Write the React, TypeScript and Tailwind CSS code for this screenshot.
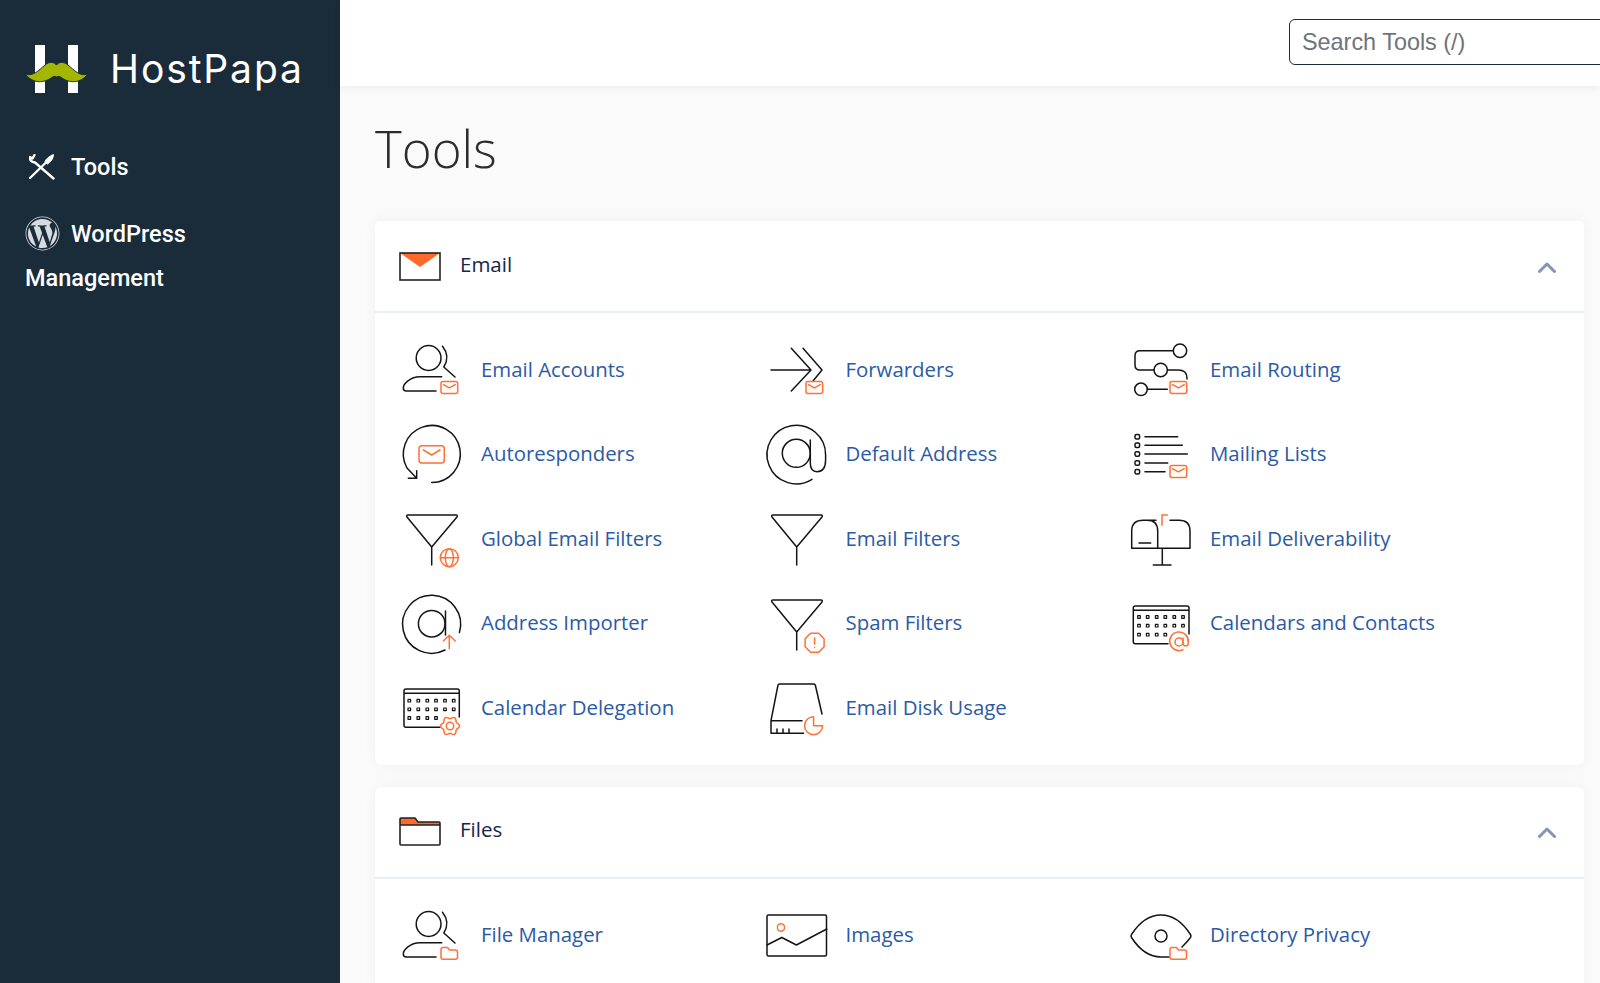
import React from "react";
import { FaWordpress } from "react-icons/fa";

const K = "#141414";
const O = "#ff7036";

function S({ children }: { children: React.ReactNode }) {
  return (
    <svg viewBox="0 0 64 64" fill="none" stroke={K} strokeWidth={1.5} strokeLinecap="round" strokeLinejoin="round" className="h-16 w-16 shrink-0 overflow-visible">
      {children}
    </svg>
  );
}

const Env = ({ y = 43.5 }: { y?: number }) => (
  <g stroke={O}>
    <rect x={43} y={y} width={16.7} height={12} rx={2} fill="#fff" />
    <path d={`M45.5 ${y + 3.2}l5.9 3.2 5.9-3.2`} />
  </g>
);

const FolderBadge = () => (
  <path stroke={O} fill="#fff" d="M43 45.5q0-2 2-2h4.5l2 2.5h6q2 0 2 2v5.3q0 2-2 2H45q-2 0-2-2z" />
);

const Person = ({ children }: { children: React.ReactNode }) => (
  <S>
    <circle cx={30.6} cy={20} r={12.4} />
    <path d="M44.500 8.200q8 10 1.300 20.800l11.200 10" />
    <path d="M43.7 38.7H22C12 38.7 5.3 46 5.3 50q0 3 3 3H38" />
    {children}
  </S>
);

const Funnel = ({ children }: { children?: React.ReactNode }) => (
  <S>
    <path d="M10 8h48q2 0 1 2L33.7 40 9 10q-1-2 1-2zM33.7 40v18" />
    {children}
  </S>
);

const gearPath = (() => {
  const pts: string[] = [];
  for (let i = 0; i < 72; i++) {
    const t = (i / 72) * Math.PI * 2;
    const r = 8.4 + 1.1 * Math.cos(6 * t);
    pts.push(`${(52 + r * Math.cos(t)).toFixed(2)} ${(50 + r * Math.sin(t)).toFixed(2)}`);
  }
  return "M" + pts.join("L") + "Z";
})();

const Cal = ({ ox, oy, last, children }: { ox: number[]; oy: number[]; last: string; children: React.ReactNode }) => (
  <S>
    <path d={last} />
    {oy.map((y, r) =>
      ox.map((x, c) => (r === 2 && c > 3 ? null : <rect key={`${r}-${c}`} x={x - 1.3} y={y - 1.3} width={2.6} height={2.6} strokeWidth={1.2} />)),
    )}
    {children}
  </S>
);

const icons: Record<string, React.ReactNode> = {
  accounts: <Person><Env /></Person>,
  fileman: <Person><FolderBadge /></Person>,
  auto: (
    <S>
      <path d="M33.7 60.5A28.5 28.5 0 1 0 9 46l9.7 10.3M10.3 56.3h8.4v-7.6" />
      <g stroke={O}>
        <rect x={21} y={23.7} width={25.3} height={17.3} rx={3} />
        <path d="M25.3 28l8.4 5 8.3-5" />
      </g>
    </S>
  ),
  global: (
    <Funnel>
      <g stroke={O}>
        <circle cx={51.3} cy={50.7} r={9} />
        <ellipse cx={51.3} cy={50.7} rx={4} ry={9} />
        <path d="M42.3 50.7h18" />
      </g>
    </Funnel>
  ),
  importer: (
    <S>
      <path d="M47 58A29 29 0 1 1 61.4 40.5" />
      <circle cx={33.7} cy={31.7} r={13.3} />
      <path d="M47.5 19v24" />
      <path stroke={O} d="M51.3 56.7V44M45.3 49l6-5.7 6 5.7" />
    </S>
  ),
  delegation: (
    <Cal
      ox={[11.3, 20.3, 29.3, 38, 47, 55.7]}
      oy={[24.7, 33.3, 42]}
      last="M42 51.3H8q-2 0-2-2V15q0-2 2-2h51.3q2 0 2 2v26M6 17.3h55.3"
    >
      <g stroke={O}>
        <path d={gearPath} />
        <circle cx={52} cy={50} r={3.7} />
      </g>
    </Cal>
  ),
  forward: (
    <S>
      <path d="M8 32h39.3M28.3 10.3L48 32 28.3 53M40 10.3L59 32l-9 11" />
      <Env />
    </S>
  ),
  def: (
    <S>
      <path d="M49 57.3A29.3 29.3 0 1 1 62.6 33v5q0 11.7-8.6 11.7-6.7 0-6.7-8.7V18" />
      <circle cx={33.3} cy={31.3} r={14} />
    </S>
  ),
  filters: <Funnel />,
  spam: (
    <Funnel>
      <g stroke={O}>
        <path d="M47.6 41.2h8l5.5 5.5v8l-5.5 5.5h-8l-5.5-5.5v-8z" />
        <path d="M51.6 46v6M51.6 55.4v.1" />
      </g>
    </Funnel>
  ),
  disk: (
    <S>
      <path d="M8 44.7L15 9q.3-1 1.5-1h34.3q1.3 0 1.5 1L59 38M8 44.7h31M8 44.7v12.6h32.6M14 53v4M20 53v4M26 53v4" />
      <path stroke={O} d="M50.6 40.7A9 9 0 1 0 59.6 49.7H50.6Z" />
    </S>
  ),
  routing: (
    <S>
      <circle cx={53} cy={12.7} r={6.7} />
      <path d="M46.3 12.7H13q-5 0-5 5V27q0 5 5 5h14" />
      <circle cx={33.7} cy={32} r={6.7} />
      <path d="M40.4 32H51q9 0 9 8v1" />
      <circle cx={14} cy={51.3} r={6.3} />
      <path d="M20.3 51.3h20" />
      <Env />
    </S>
  ),
  lists: (
    <S>
      {[14.7, 23.3, 32, 41, 49.7].map((y) => (
        <rect key={y} x={8} y={y - 2.3} width={4.6} height={4.6} rx={1.5} />
      ))}
      <path d="M18 14.7h32.7M18 23.3h37.3M18 32h42.3M18 41h22.7M18 49.7h20" />
      <Env />
    </S>
  ),
  deliver: (
    <S>
      <path d="M4.7 41.3V24q0-10.7 11.6-10.7H20q10.7 0 10.7 10.7v17.3M16.3 13.3H29M43 13.3h9q11 0 11 10.7v17.3H4.7M35.3 41.3V58M26.3 58H44M12 36h11.7" />
      <path stroke={O} d="M35 18.3V8h5.3" />
    </S>
  ),
  contacts: (
    <Cal
      ox={[12, 20.7, 29.7, 38.3, 47.3, 56]}
      oy={[25, 33.7, 42.7]}
      last="M41 51.7H8.3q-2 0-2-2V16q0-2 2-2H60q2 0 2 2v26M6.3 18.3H62"
    >
      <g stroke={O}>
        <path d="M56 57.7A9.3 9.3 0 1 1 61.3 50v1q0 3-2.5 3t-2.8-3v-5" />
        <circle cx={52} cy={50} r={4} />
      </g>
    </Cal>
  ),
  images: (
    <S>
      <rect x={4} y={11} width={59.5} height={41} rx={1.5} />
      <path d="M4 41l14.8-7.5L33.4 41l30.4-16" />
      <ellipse stroke={O} cx={18} cy={23.5} rx={3.6} ry={3.8} />
    </S>
  ),
  privacy: (
    <S>
      <path d="M42 53H34C20 53 10 42 4.5 33.500Q3.500 32 4.500 30.500C10 22 20 11 34 11s24 11 29.500 19.500Q64.500 32 63.500 33.500Q60 38 55 43" />
      <circle cx={34} cy={32} r={6} />
      <FolderBadge />
    </S>
  ),
};

type Item = [string, string];

const email: Item[] = [
  ["accounts", "Email Accounts"], ["forward", "Forwarders"], ["routing", "Email Routing"],
  ["auto", "Autoresponders"], ["def", "Default Address"], ["lists", "Mailing Lists"],
  ["global", "Global Email Filters"], ["filters", "Email Filters"], ["deliver", "Email Deliverability"],
  ["importer", "Address Importer"], ["spam", "Spam Filters"], ["contacts", "Calendars and Contacts"],
  ["delegation", "Calendar Delegation"], ["disk", "Email Disk Usage"],
];
const files: Item[] = [["fileman", "File Manager"], ["images", "Images"], ["privacy", "Directory Privacy"]];

function Section({ title, icon, items }: { title: string; icon: React.ReactNode; items: Item[] }) {
  return (
    <section className="mb-[22px] rounded-md bg-white shadow-[0_0_14px_rgba(0,0,0,0.04)]">
      <header className="flex h-[92px] items-center border-b-2 border-[#e9eff5] pl-[24px] pr-[28px]">
        <span className="w-[61px] shrink-0">{icon}</span>
        <h2 className="pb-[4px] text-[20.500px] font-normal text-[#16264a]">{title}</h2>
        <svg viewBox="0 0 18 11" fill="none" stroke="#8595b5" strokeWidth={3} strokeLinecap="round" strokeLinejoin="round" className="ml-auto mt-[2px] h-[11px] w-[18px]">
          <path d="M1.500 9.500L9 2l7.500 7.500" />
        </svg>
      </header>
      <ul className="grid auto-rows-[84.67px] grid-cols-[364.500px_364.500px_364.500px] pb-[14px] pl-[23px] pt-[14.500px]">
        {items.map(([k, label]) => (
          <li key={label} className="flex items-center gap-[19px]">
            {icons[k]}
            <a className="pb-[2px] text-[20.400px] text-[#2b5aa6]">{label}</a>
          </li>
        ))}
      </ul>
    </section>
  );
}

export default function App() {
  return (
    <div className="flex h-[983px] w-full overflow-hidden bg-[#fafafa] font-['Open_Sans',sans-serif]">
      <aside className="w-[340px] shrink-0 bg-[#1a2b3a] pl-[25px] font-['Roboto',sans-serif] text-white">
        <div className="flex h-[145px] items-start pt-[45px]">
          <svg viewBox="0 0 63 48" className="h-12 w-[63px] shrink-0">
            <path fill="#fff" d="M10 0h10v48H10zM43 0h10v48H43z" />
            <path
              fill="#a4b600"
              stroke="#1a2b3a"
              strokeWidth={1}
              d="M0 29C8 32 14 25 20 20C25 16 29 17 31.500 20C34 17 38 16 43 20C49 25 55 32 63 29C55 39 44 38 37 33C34 31 33 31 31.500 32C30 31 29 31 26 33C19 38 8 39 0 29Z"
            />
          </svg>
          <span className="ml-[22px] mt-[1px] font-['Inter',sans-serif] text-[39px] font-normal leading-[46px] tracking-[1.900px]">HostPapa</span>
        </div>
        <nav className="text-[23.500px] font-medium leading-[44px]">
          <a className="flex h-[44px] items-center">
            <svg viewBox="0 0 26 26" fill="none" stroke="#fff" strokeWidth={2.400} strokeLinecap="round" strokeLinejoin="round" className="ml-1 mr-4 h-[26px] w-[26px]">
              <path d="M1 24L17.500 8" />
              <path d="M16 7.500Q18 3 24.500 0.500Q24 7 18.500 10Z" fill="#fff" strokeWidth={1} />
              <path d="M5.500 1L3.500 4.500L1 3Q0.500 8 6 8.500L24.500 24.500" />
            </svg>
            Tools
          </a>
          <a className="mt-[23px] block w-[250px]">
            <FaWordpress className="mr-[11px] inline-block align-[-9px] text-[35px] text-[#d6dbdf]" />
            WordPress Management
          </a>
        </nav>
      </aside>
      <div className="min-w-0 flex-1">
        <div className="relative z-10 flex h-[86px] items-center justify-end bg-white pb-[2px] shadow-[0_2px_8px_rgba(0,0,0,0.06)]">
          <input
            readOnly
            placeholder="Search Tools (/)"
            className="-mr-[30px] h-[46px] w-[341px] shrink-0 rounded-md border-[1.500px] border-[#1a2b3a] bg-white px-[12px] font-['Liberation_Sans',sans-serif] text-[23.400px] outline-none placeholder:text-[#6f7479]"
          />
        </div>
        <main className="pl-[35px] pr-4">
          <h1 className="flex h-[135px] items-center pb-[10px] text-[51px] font-light text-[#2d2d2d]">Tools</h1>
          <Section
            title="Email"
            items={email}
            icon={
              <svg viewBox="0 0 42 29" className="h-[29px] w-[42px]">
                <path d="M1 1h40L21 15z" fill="#ff6a2b" />
                <rect x={1} y={1} width={40} height={27} fill="none" stroke="#222" strokeWidth={1.6} />
              </svg>
            }
          />
          <Section
            title="Files"
            items={files}
            icon={
              <svg viewBox="0 0 42 29" className="h-[29px] w-[42px]">
                <path d="M1 8V2q0-1 1-1h14l3 4h22v3z" fill="#ff6a2b" />
                <path d="M1 8h40M1 2q0-1 1-1h14l3 4h21q1 0 1 1v21q0 1-1 1H2q-1 0-1-1z" fill="none" stroke="#222" strokeWidth={1.6} />
              </svg>
            }
          />
        </main>
      </div>
    </div>
  );
}
